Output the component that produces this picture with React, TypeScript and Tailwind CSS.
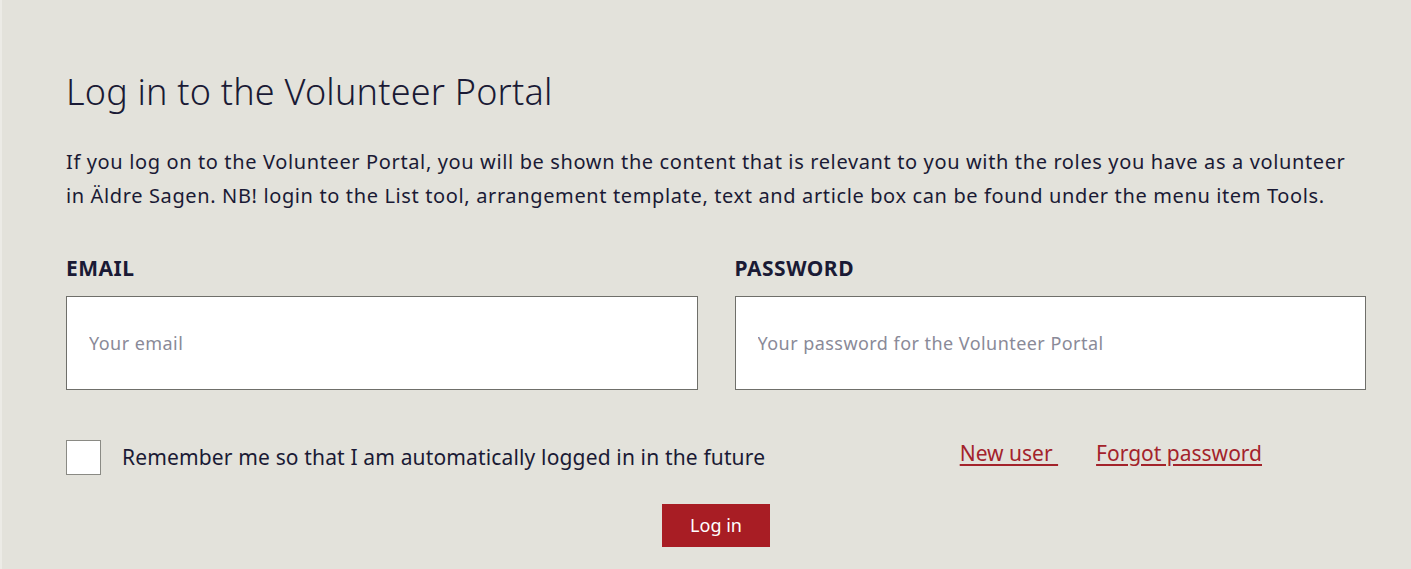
import { useState } from 'react';

export default function App() {
  const [remember, setRemember] = useState(false);

  return (
    <div className="min-h-[569px] w-full bg-[#e3e2db] border-l-2 border-[#ecebe6] text-[#1a1a35] font-['Noto_Sans',sans-serif]">
      <div className="pl-[64px] pr-[45px] pt-[70px]">
        {/* Heading */}
        <h1 className="text-[36px] font-light leading-[44px] tracking-[0.2px]">Log in to the Volunteer Portal</h1>
        <p className="mt-[31px] text-[20px] leading-[34px] tracking-[0.63px]">
          If you log on to the Volunteer Portal, you will be shown the content that is relevant to you with the roles you have as a volunteer in Äldre Sagen. NB! login to the List tool, arrangement template, text and article box can be found under the menu item Tools.
        </p>

        {/* Fields */}
        <div className="mt-[41px] grid grid-cols-2 gap-[37px]">
          <div>
            <label className="block text-[21px] font-bold leading-[28px] tracking-[0.5px]">EMAIL</label>
            <input
              type="email"
              placeholder="Your email"
              className="mt-[14px] w-full h-[94px] bg-white border border-[#6f6f6a] px-[22px] text-[18px] tracking-[0.45px] placeholder:text-[#8a8a98] outline-none"
            />
          </div>
          <div>
            <label className="block text-[21px] font-bold leading-[28px] tracking-[0.5px]">PASSWORD</label>
            <input
              type="password"
              placeholder="Your password for the Volunteer Portal"
              className="mt-[14px] w-full h-[94px] bg-white border border-[#6f6f6a] px-[22px] text-[18px] tracking-[0.45px] placeholder:text-[#8a8a98] outline-none"
            />
          </div>
        </div>

        {/* Remember + links */}
        <div className="mt-[50px] flex items-center">
          <button
            type="button"
            onClick={() => setRemember(!remember)}
            className="w-[35px] h-[35px] bg-white border border-[#8a8a84] shrink-0"
            aria-pressed={remember}
          >
            {remember ? <span className="text-[18px]">✓</span> : null}
          </button>
          <span className="ml-[21px] text-[21px] leading-[30px] tracking-[0.15px] -mt-[2px]">
            Remember me so that I am automatically logged in in the future
          </span>
          <div className="ml-auto mr-[104px] flex gap-[38px] text-[21px] text-[#a3232b] -mt-[8px]">
            <a href="#" className="underline underline-offset-[3px]">New user&nbsp;</a>
            <a href="#" className="underline underline-offset-[3px]">Forgot password</a>
          </div>
        </div>

        {/* Submit */}
        <div className="mt-[29px] flex justify-center">
          <button type="button" className="w-[108px] h-[43px] bg-[#a81d24] text-white text-[18px]">
            Log in
          </button>
        </div>
      </div>
    </div>
  );
}
